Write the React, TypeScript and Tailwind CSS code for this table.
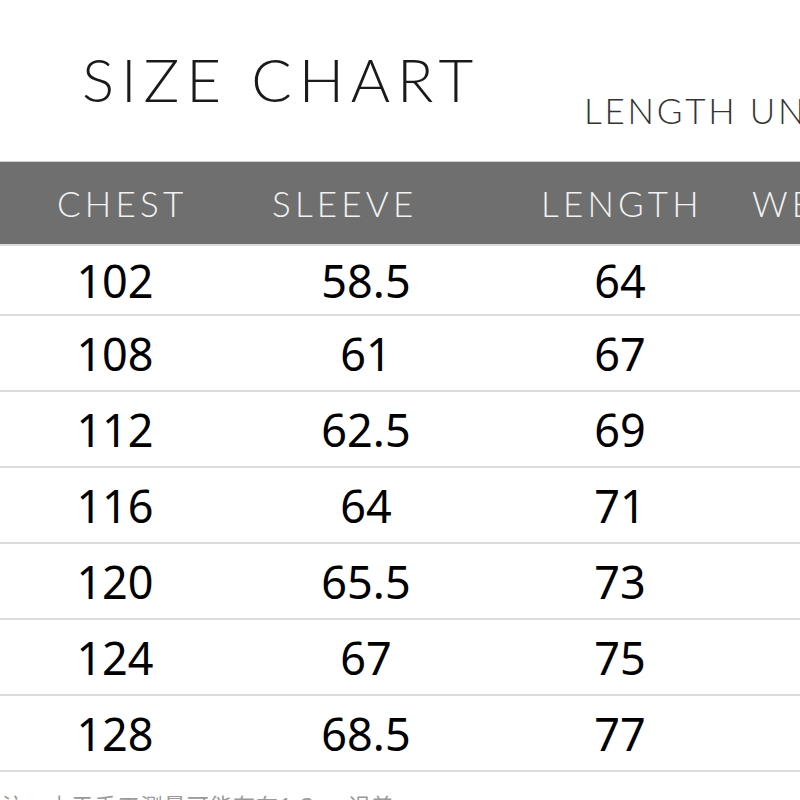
const rows = [
  ['102', '58.5', '64', '50-57'],
  ['108', '61', '67', '57-65'],
  ['112', '62.5', '69', '65-72'],
  ['116', '64', '71', '72-80'],
  ['120', '65.5', '73', '80-87'],
  ['124', '67', '75', '87-95'],
  ['128', '68.5', '77', '95-102'],
]

const thin = "font-['Lato',sans-serif] font-light"
const num = "font-['Noto_Sans','Noto_Sans_CJK_SC',sans-serif]"

export default function App() {
  return (
    <div className="h-[800px] w-[800px] overflow-hidden bg-white">
      {/* Title */}
      <div className="relative h-[161px] whitespace-nowrap">
        <div className={`${thin} pl-[82px] pt-[42px] text-[60px] leading-[74px] tracking-[0.115em] text-[#1a1a1a]`}>
          SIZE CHART
        </div>
        <div className={`${thin} absolute left-[584px] top-[88px] text-[35px] leading-[44px] tracking-[0.08em] text-[#333]`}>
          LENGTH UNIT: CM
        </div>
      </div>

      {/* Header */}
      <div className="border-t border-[#cfcfcf]">
        <div
          className={`${thin} flex h-[84px] items-center whitespace-nowrap border-b-2 border-[#dcdcdc] bg-[#6f6f6f] text-[35px] tracking-[0.12em] text-[#f2f2f2]`}
        >
          <span className="ml-[57px] w-[215px] shrink-0">CHEST</span>
          <span className="w-[269px] shrink-0">SLEEVE</span>
          <span className="w-[211px] shrink-0">LENGTH</span>
          <span className="shrink-0">WEIGHT</span>
        </div>
      </div>

      {/* Rows */}
      {rows.map((r, i) => (
        <div
          key={r[0]}
          className={`${num} grid grid-cols-[230px_272px_236px_262px] items-center border-b-2 border-[#dcdcdc] text-[45px] leading-none text-black ${
            i === 0 ? 'h-[70px]' : 'h-[76px]'
          }`}
        >
          <div className="text-center">{r[0]}</div>
          <div className="text-center">{r[1]}</div>
          <div className="text-center">{r[2]}</div>
          <div className="whitespace-nowrap pl-[61px]">{r[3]}</div>
        </div>
      ))}

      {/* Note */}
      <div className={`${num} mt-[22px] whitespace-nowrap pl-[2px] text-[22px] leading-none tracking-[0.05em] text-[#9a9a9a]`}>
        注：由于手工测量可能存在1-3cm误差
      </div>
    </div>
  )
}
